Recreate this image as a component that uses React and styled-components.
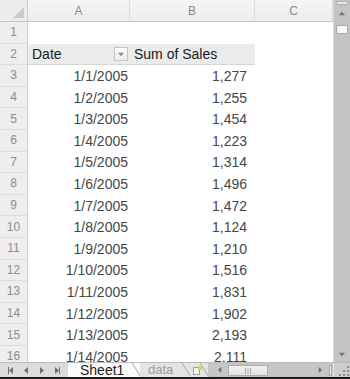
import React from "react";
import styled, { createGlobalStyle } from "styled-components";

const Global = createGlobalStyle`
  body { margin: 0; background: #fff; }
`;

const Frame = styled.div`
  width: 350px;
  height: 379px;
  box-sizing: border-box;
  border-bottom: 2px solid #1b1b1b;
  display: flex;
  flex-direction: column;
  overflow: hidden;
  background: #fff;
  font-family: "Liberation Sans", Arial, sans-serif;
`;

const Body = styled.div`
  flex: 1;
  min-height: 0;
  display: flex;
`;

const Grid = styled.div`
  flex: 1;
  display: grid;
  grid-template-columns: 28px 102px 125px 78px;
  grid-template-rows: 22px;
  grid-auto-rows: 21.6px;
  align-content: start;
  overflow: hidden;
`;

const Corner = styled.div`
  background: #ececec;
  border-right: 1px solid #d0d0d0;
  border-bottom: 1px solid #c6c6c6;
  box-sizing: border-box;
  position: relative;
  &::after {
    content: "";
    position: absolute;
    right: 3px;
    bottom: 3px;
    border-style: solid;
    border-width: 0 0 11px 11px;
    border-color: transparent transparent #c9c9c9 transparent;
  }
`;

const ColHead = styled.div`
  background: linear-gradient(#f6f6f6, #ececec);
  border-right: 1px solid #dcdcdc;
  border-bottom: 1px solid #c6c6c6;
  box-sizing: border-box;
  display: flex;
  align-items: center;
  justify-content: center;
  color: #8a8a8a;
  font-size: 12px;
`;

const RowHead = styled.div`
  background: #eeeeee;
  border-right: 1px solid #cfcfcf;
  border-bottom: 1px solid #dcdcdc;
  box-sizing: border-box;
  display: flex;
  align-items: center;
  justify-content: center;
  color: #8c8c8c;
  font-size: 12px;
`;

const Cell = styled.div`
  display: flex;
  align-items: center;
  justify-content: ${(p) => (p.$right ? "flex-end" : "flex-start")};
  padding: ${(p) => (p.$right ? `0 ${p.$pad || 2}px 0 0` : "0 0 0 4px")};
  font-size: 14px;
  color: #474747;
  white-space: nowrap;
  overflow: hidden;
`;

const PivotHead = styled.div`
  display: flex;
  align-items: center;
  justify-content: space-between;
  padding: 0 2px 0 4px;
  background: #ebebeb;
  border-bottom: 1px solid #d6d6d6;
  box-sizing: border-box;
  font-size: 14px;
  color: #1a1a1a;
  white-space: nowrap;
`;

const FilterBtn = styled.div`
  width: 14px;
  height: 14px;
  box-sizing: border-box;
  border: 1px solid #c4c4c4;
  background: linear-gradient(#fdfdfd, #ececec);
  display: flex;
  align-items: center;
  justify-content: center;
`;

const VScroll = styled.div`
  width: 17px;
  display: flex;
  flex-direction: column;
  background: #c3c3c3;
  border-left: 1px solid #d8d8d8;
  box-sizing: border-box;
`;

const Splitter = styled.div`
  height: 4px;
  margin: 1px 2px 0;
  background: #e8e8e8;
  border: 1px solid #b4b4b4;
  box-sizing: border-box;
`;

const ArrowBtn = styled.div`
  width: ${(p) => p.$w || "100%"};
  height: ${(p) => p.$h || "100%"};
  flex-shrink: 0;
  display: flex;
  align-items: center;
  justify-content: center;
`;

const VThumb = styled.div`
  height: 7px;
  margin: 4px 2px 0;
  background: linear-gradient(90deg, #f4f4f4, #ffffff);
  border: 1px solid #a8a8a8;
  border-radius: 1px;
`;

const Track = styled.div`
  flex: 1;
`;

const Bottom = styled.div`
  height: 15px;
  display: flex;
  background: #dcdcdc;
  border-top: 1px solid #bcbcbc;
  box-sizing: border-box;
`;

const Nav = styled.div`
  width: 68px;
  display: flex;
  align-items: center;
  justify-content: space-around;
  padding: 0 4px;
  box-sizing: border-box;
`;

const Tab = styled.div`
  position: relative;
  width: ${(p) => p.$w}px;
  display: flex;
  align-items: center;
  padding-left: ${(p) => p.$pl}px;
  box-sizing: border-box;
  background: ${(p) => (p.$active ? "#fbfbfb" : "#e4e4e4")};
  color: ${(p) => (p.$active ? "#222" : "#9a9a9a")};
  font-size: ${(p) => (p.$active ? 14 : 13)}px;
  line-height: 14px;
  white-space: nowrap;
  &::after {
    content: "";
    position: absolute;
    right: 3px;
    top: -1px;
    height: 16px;
    border-right: 1px solid #a9a9a9;
    transform: skewX(32deg);
  }
`;

const HScroll = styled.div`
  flex: 1;
  display: flex;
  align-items: stretch;
  background: #c6c6c6;
  padding-left: 6px;
`;

const HThumb = styled.div`
  width: 40px;
  margin: 2px 0 1px 2px;
  background: linear-gradient(#f2f2f2, #e2e2e2);
  border: 1px solid #ababab;
  box-sizing: border-box;
  display: flex;
  align-items: center;
  justify-content: center;
`;

const Grip = styled.div`
  width: 17px;
  background: #cdcdcd;
  border-left: 1px solid #e4e4e4;
  box-sizing: border-box;
  display: flex;
  align-items: flex-end;
  justify-content: flex-end;
`;

const Tri = ({ dir, color = "#707070", size = 7, bar }) => {
  const pts = {
    up: "0,6 3.5,2 7,6",
    down: "0,2 3.5,6 7,2",
    left: "5,0 5,7 1,3.5",
    right: "2,0 2,7 6,3.5",
  }[dir];
  return (
    <svg width={size} height={size} viewBox="0 0 7 7">
      <polygon points={pts} fill={color} />
      {bar === "left" && <rect x="0" y="0" width="1" height="7" fill={color} />}
      {bar === "right" && <rect x="6" y="0" width="1" height="7" fill={color} />}
    </svg>
  );
};

const rows = [
  ["1/1/2005", "1,277"],
  ["1/2/2005", "1,255"],
  ["1/3/2005", "1,454"],
  ["1/4/2005", "1,223"],
  ["1/5/2005", "1,314"],
  ["1/6/2005", "1,496"],
  ["1/7/2005", "1,472"],
  ["1/8/2005", "1,124"],
  ["1/9/2005", "1,210"],
  ["1/10/2005", "1,516"],
  ["1/11/2005", "1,831"],
  ["1/12/2005", "1,902"],
  ["1/13/2005", "2,193"],
  ["1/14/2005", "2,111"],
];

export default function App() {
  return (
    <Frame>
      <Global />
      <Body>
        <Grid>
          <Corner />
          <ColHead>A</ColHead>
          <ColHead>B</ColHead>
          <ColHead>C</ColHead>

          <RowHead>1</RowHead>
          <Cell />
          <Cell />
          <Cell />

          <RowHead>2</RowHead>
          <PivotHead>
            Date
            <FilterBtn>
              <Tri dir="down" size={6} color="#8a8a8a" />
            </FilterBtn>
          </PivotHead>
          <PivotHead>Sum of Sales</PivotHead>
          <Cell />

          {rows.map(([date, sales], i) => (
            <React.Fragment key={date}>
              <RowHead>{i + 3}</RowHead>
              <Cell $right>{date}</Cell>
              <Cell $right $pad={8}>{sales}</Cell>
              <Cell />
            </React.Fragment>
          ))}
        </Grid>
        <VScroll>
          <Splitter />
          <ArrowBtn $h="16px">
            <Tri dir="up" size={6} />
          </ArrowBtn>
          <VThumb />
          <Track />
          <ArrowBtn $h="16px">
            <Tri dir="down" size={6} />
          </ArrowBtn>
        </VScroll>
      </Body>
      <Bottom>
        <Nav>
          <Tri dir="left" bar="left" />
          <Tri dir="left" />
          <Tri dir="right" />
          <Tri dir="right" bar="right" />
        </Nav>
        <Tab $active $w={72} $pl={12}>Sheet1</Tab>
        <Tab $w={50} $pl={8}>data</Tab>
        <Tab $w={18} $pl={3}>
          <svg width="9" height="9" viewBox="0 0 9 9">
            <rect x="0.5" y="1.5" width="6" height="7" fill="#f4f4f4" stroke="#a0a0a0" />
            <rect x="5" y="0" width="4" height="4" fill="#e8c86a" />
          </svg>
        </Tab>
        <HScroll>
          <ArrowBtn $w="12px">
            <Tri dir="left" size={6} />
          </ArrowBtn>
          <HThumb>
            <svg width="6" height="6" viewBox="0 0 6 6">
              <rect x="0" y="0" width="1" height="6" fill="#b0b0b0" />
              <rect x="2.5" y="0" width="1" height="6" fill="#b0b0b0" />
              <rect x="5" y="0" width="1" height="6" fill="#b0b0b0" />
            </svg>
          </HThumb>
          <Track />
          <ArrowBtn $w="14px">
            <Tri dir="right" size={6} />
          </ArrowBtn>
          <ArrowBtn $w="6px">
            <svg width="3" height="11" viewBox="0 0 3 11">
              <rect x="0.5" y="0.5" width="2" height="10" fill="#eee" stroke="#a6a6a6" />
            </svg>
          </ArrowBtn>
        </HScroll>
        <Grip>
          <svg width="12" height="12" viewBox="0 0 12 12">
            {[[9, 1], [9, 5], [5, 5], [9, 9], [5, 9], [1, 9]].map(([x, y]) => (
              <rect key={`${x}-${y}`} x={x} y={y} width="2" height="2" fill="#8f8f8f" />
            ))}
          </svg>
        </Grip>
      </Bottom>
    </Frame>
  );
}
